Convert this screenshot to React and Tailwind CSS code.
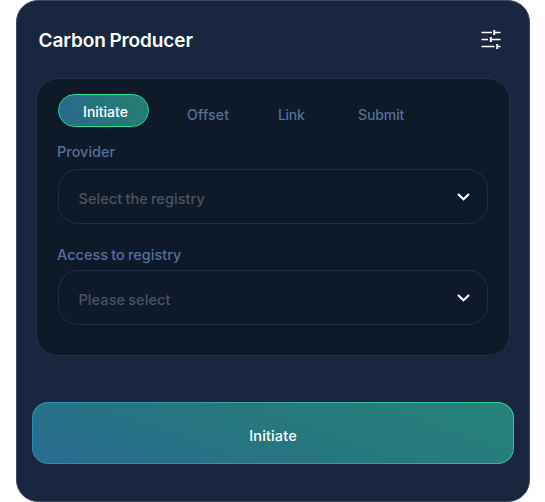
function Sliders() {
  return (
    <svg className="-mt-[2px]" width="20" height="20" viewBox="0 0 20 20" fill="none" stroke="#fff" strokeWidth="1.6">
      <path d="M0.5 3.5H11M13.5 3.5H19.5M0.5 10.5H7M10 10.5H19.5M0.5 17.5H13.5M16 17.5H19.5" />
      <path strokeWidth="2" d="M13.2 1V6M9.8 8V13M16.2 15V20" />
    </svg>
  );
}

function Select({ placeholder, className }) {
  return (
    <button
      className={`flex h-[55px] w-[430px] items-center justify-between rounded-[20px] border border-[#223043] pr-[17px] pl-[19.5px] text-left ${className}`}
    >
      <span className="mt-[5px] text-[14.5px] leading-5 font-medium tracking-[0.07px] text-[#4b545f] [word-spacing:-0.8px]">
        {placeholder}
      </span>
      <svg width="13" height="8" viewBox="0 0 13 8" fill="none" stroke="#fff" strokeWidth="2.1">
        <path d="M1 1L6.5 6.3L12 1" />
      </svg>
    </button>
  );
}

export default function App() {
  return (
    <div className="h-[502px] w-[545px] overflow-hidden bg-white pl-4 font-['Inter',sans-serif] text-[#55709a]">
      <main className="flex h-[502px] w-[514px] flex-col rounded-[22px] border border-[#3d4c62] bg-[#18273f]">
        <header className="flex h-[77px] items-center justify-between pr-[28px] pl-[21.5px]">
          <h1 className="mt-[3px] text-[19px] font-semibold tracking-[-0.1px] text-white [word-spacing:-1px]">
            Carbon Producer
          </h1>
          <Sliders />
        </header>
        <section className="ml-[19px] h-[278px] w-[474px] rounded-[22px] border border-[#223148] bg-[#0e1929] pl-[21px]">
          <nav className="mt-[15px] flex h-[33px] items-start text-[14px] leading-5 font-medium">
            <button className="flex h-[33px] w-[91px] shrink-0 items-center justify-center rounded-full border border-[#1fdc91] bg-linear-[75deg,#29698c,#277e70] pt-[2px] pl-1 font-medium text-white">
              Initiate
            </button>
            <button className="mt-[11px] ml-[38px] w-[91px] text-left tracking-[0.2px]">Offset</button>
            <button className="mt-[11px] w-[80px] text-left tracking-[-0.3px]">Link</button>
            <button className="mt-[11px] text-left tracking-[-0.1px]">Submit</button>
          </nav>
          <div className="mt-[15px] -ml-px text-[14.5px] leading-5 font-medium">Provider</div>
          <Select placeholder="Select the registry" className="mt-[7px]" />
          <div className="mt-[21px] -ml-px text-[14.5px] leading-5 font-medium [word-spacing:-0.7px]">
            Access to registry
          </div>
          <Select placeholder="Please select" className="mt-[5px]" />
        </section>
        <button className="mt-[46px] ml-[15px] flex h-[62px] w-[482px] items-center justify-center rounded-[16px] border border-transparent pt-[6px] text-[14.5px] font-medium tracking-[0.15px] text-white [background:linear-gradient(20deg,#286b91,#26777f_50%,#27827a)_padding-box,linear-gradient(20deg,#2f85bd,#2d9da8_45%,#34d69a)_border-box]">
          Initiate
        </button>
      </main>
    </div>
  );
}
